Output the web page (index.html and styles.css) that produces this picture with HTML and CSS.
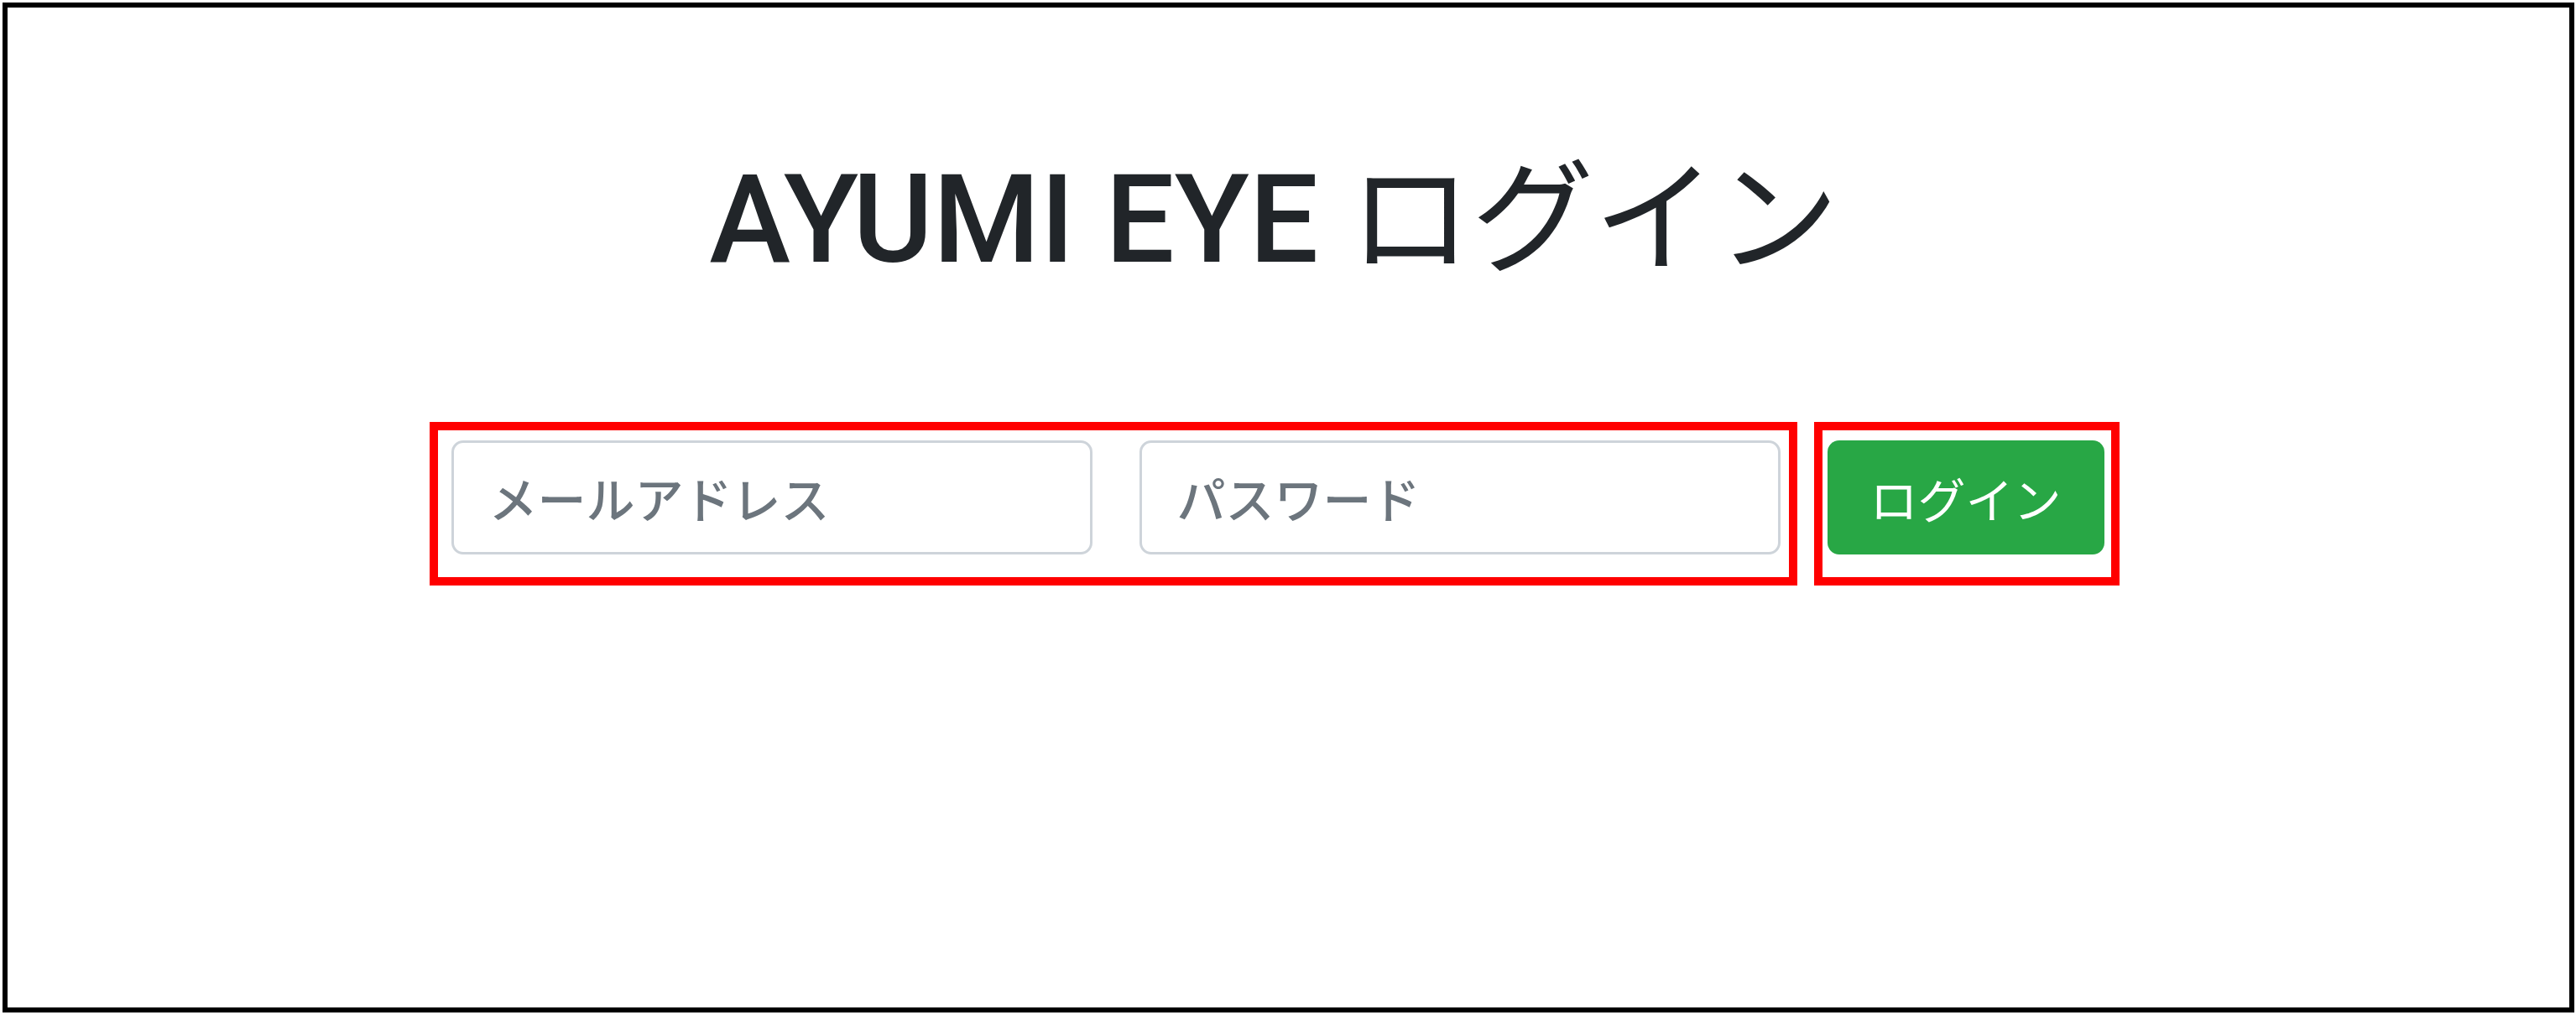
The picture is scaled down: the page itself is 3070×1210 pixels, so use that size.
FILE: index.html
```html
<!DOCTYPE html>
<html lang="ja">
<head>
    <meta charset="UTF-8">
    <meta name="viewport" content="width=device-width, initial-scale=1.0">
    <title>AYUMI EYE ログイン</title>
    <link rel="stylesheet" href="styles.css">
</head>
<body>
    <!-- Login screen capture frame -->
    <div class="frame">
        <div class="page">
            <h1 class="title">AYUMI EYE <span class="title-jp">ログイン</span></h1>

            <div class="login-row">
                <!-- Credentials -->
                <div class="mark mark-fields">
                    <input type="email" class="form-input" placeholder="メールアドレス">
                    <input type="password" class="form-input" placeholder="パスワード">
                </div>

                <!-- Submit -->
                <div class="mark mark-submit">
                    <button type="button" class="login-btn">ログイン</button>
                </div>
            </div>
        </div>
    </div>
</body>
</html>
```

FILE: styles.css
```css
* {
    margin: 0;
    padding: 0;
    box-sizing: border-box;
}

body {
    background: #fff;
    font-family: Roboto, "Noto Sans CJK JP", sans-serif;
    color: #212529;
}

.frame {
    margin: 3px;
    width: 3065px;
    height: 1204px;
    border: 6px solid #000;
    background: #fff;
}

.page {
    display: flex;
    flex-direction: column;
    align-items: center;
    padding-right: 34px;
}

.title {
    margin-top: 152px;
    font-size: 146px;
    font-weight: 500;
    line-height: 1.2;
    color: #212529;
}

.title-jp {
    font-family: "Noto Sans CJK JP", sans-serif;
    font-weight: 400;
}

.login-row {
    display: flex;
    gap: 20px;
    margin-top: 153px;
}

.mark {
    border: 10px solid #ff0000;
}

.mark-fields {
    display: flex;
    gap: 56px;
    padding: 12px 10px 27px 16px;
}

.mark-submit {
    padding: 12px 8px 27px 6px;
}

.form-input {
    width: 764px;
    height: 136px;
    padding: 0 42px;
    border: 3px solid #ced4da;
    border-radius: 14px;
    background: #fff;
    font-family: "Noto Sans CJK JP", sans-serif;
    font-size: 58px;
    font-weight: 500;
    color: #495057;
    outline: none;
}

.form-input::placeholder {
    color: #6c757d;
}

.login-btn {
    display: block;
    width: 330px;
    height: 136px;
    border: none;
    border-radius: 14px;
    background: #28a745;
    color: #fff;
    font-family: "Noto Sans CJK JP", sans-serif;
    font-size: 57px;
    cursor: pointer;
}
```
